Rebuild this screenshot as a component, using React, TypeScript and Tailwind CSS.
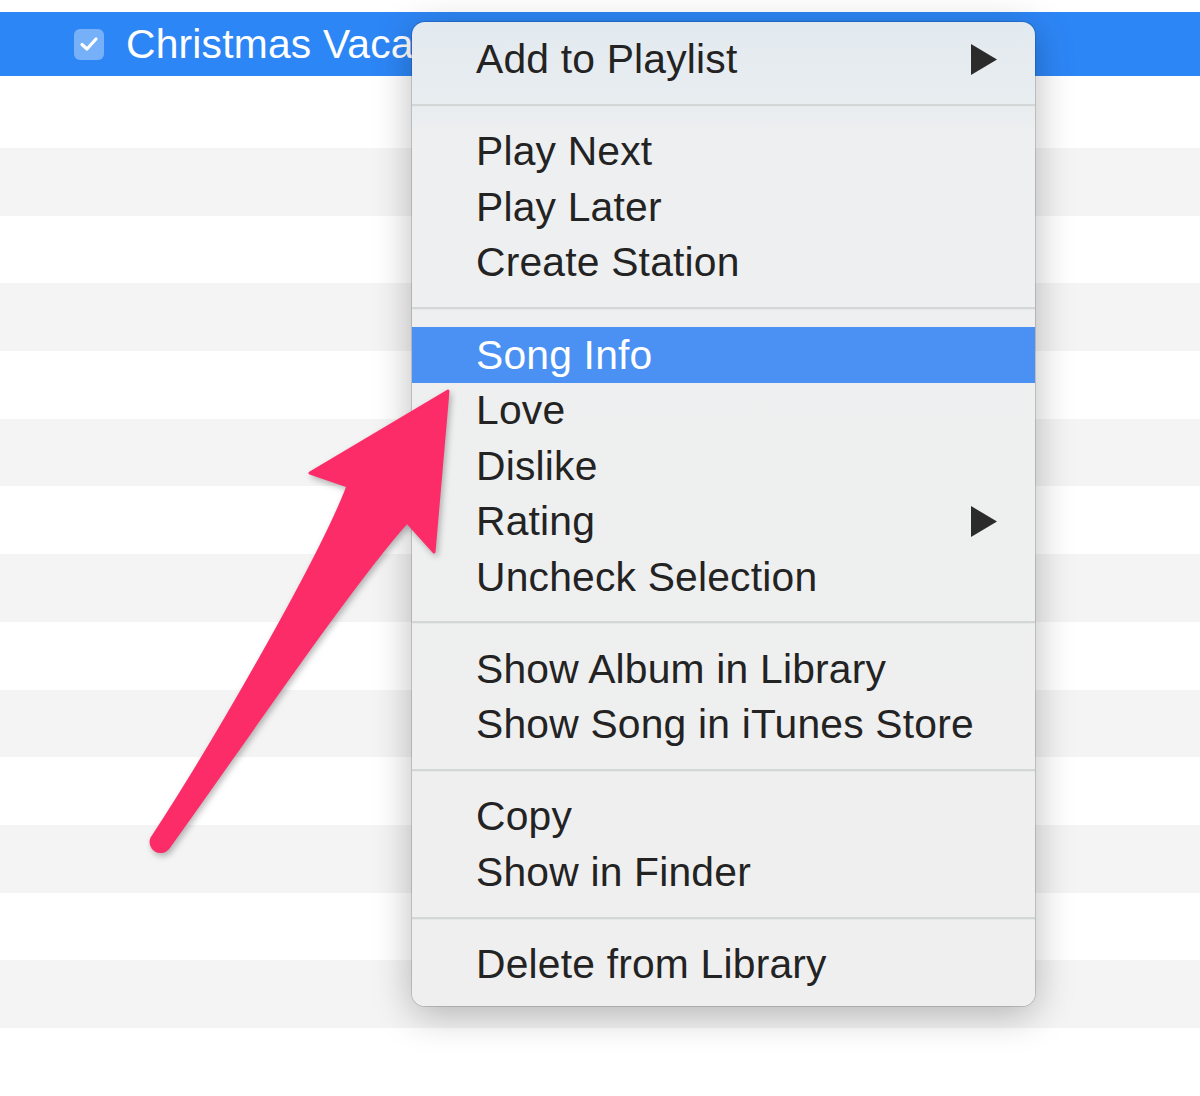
type MenuEntry = { label: string; submenu?: boolean; active?: boolean } | 'sep';

const entries: MenuEntry[] = [
  { label: 'Add to Playlist', submenu: true },
  'sep',
  { label: 'Play Next' },
  { label: 'Play Later' },
  { label: 'Create Station' },
  'sep',
  { label: 'Song Info', active: true },
  { label: 'Love' },
  { label: 'Dislike' },
  { label: 'Rating', submenu: true },
  { label: 'Uncheck Selection' },
  'sep',
  { label: 'Show Album in Library' },
  { label: 'Show Song in iTunes Store' },
  'sep',
  { label: 'Copy' },
  { label: 'Show in Finder' },
  'sep',
  { label: 'Delete from Library' },
];

function SubmenuArrow({ light }: { light?: boolean }) {
  return (
    <svg width="28" height="33" viewBox="0 0 28 33" className="shrink-0">
      <polygon points="1,1 27,16.5 1,32" fill={light ? '#ffffff' : '#2b2b2b'} />
    </svg>
  );
}

function ContextMenu() {
  return (
    <div className="absolute left-[412px] top-[22px] w-[623px] rounded-[13px] pt-[10px] pb-[14px] bg-[linear-gradient(180deg,#e3eaef_0px,#e8edf0_85px,#eeeff0_115px,#efefef_100%)] shadow-[0_0_0_1px_rgba(0,0,0,0.14),0_8px_38px_rgba(0,0,0,0.28)]">
      {entries.map((e, i) =>
        e === 'sep' ? (
          <div key={i} className="h-[36.6px] flex items-center">
            <div className="w-full h-[3px] bg-[#d4d7d8] border-b border-[#e6e8e8]" />
          </div>
        ) : (
          <div
            key={i}
            className={`h-[55.5px] flex items-center justify-between pl-[64px] pr-[37px] ${
              e.active ? 'bg-[#4a91f3] text-white' : 'text-[#232323]'
            }`}
          >
            <span className="text-[40.8px] tracking-[0.2px] leading-none whitespace-nowrap">{e.label}</span>
            {e.submenu && <SubmenuArrow light={e.active} />}
          </div>
        )
      )}
    </div>
  );
}

function PinkArrow() {
  return (
    <svg
      width="1200"
      height="1096"
      viewBox="0 0 1200 1096"
      className="absolute left-0 top-0 pointer-events-none drop-shadow-[2px_3px_3px_rgba(0,0,0,0.28)]"
    >
      <path
        d="M448 391 L310 473 L348 486 C320 560 210 750 152 838 A9.5 9.5 0 0 0 168 848 C225 770 350 585 407 522 L434 552 Z"
        fill="#fc2c68"
        stroke="#fc2c68"
        strokeWidth="3"
        strokeLinejoin="round"
      />
    </svg>
  );
}

export default function App() {
  const stripes = Array.from({ length: 14 }, (_, i) => i);
  return (
    <div className="relative w-[1200px] h-[1096px] overflow-hidden bg-white font-['Liberation_Sans',Arial,sans-serif]">
      <div className="h-[12px] bg-white" />
      <div className="h-[64px] bg-[#2d86f6] flex items-center pl-[74px] gap-[22px]">
        <div className="w-[30px] h-[31px] rounded-[6px] bg-white/35 flex items-center justify-center">
          <svg width="20" height="16" viewBox="0 0 20 16">
            <path d="M3 8.5 L8 13 L17 3" fill="none" stroke="#fff" strokeWidth="3.2" strokeLinecap="round" strokeLinejoin="round" />
          </svg>
        </div>
        <span className="text-white text-[40.8px] tracking-[0.2px] leading-none whitespace-nowrap">Christmas Vacation</span>
      </div>
      <div className="h-[72px] bg-white" />
      {stripes.map((i) => (
        <div key={i} className={`h-[67.7px] ${i % 2 === 0 ? 'bg-[#f4f4f4]' : 'bg-white'}`} />
      ))}
      <ContextMenu />
      <PinkArrow />
    </div>
  );
}
